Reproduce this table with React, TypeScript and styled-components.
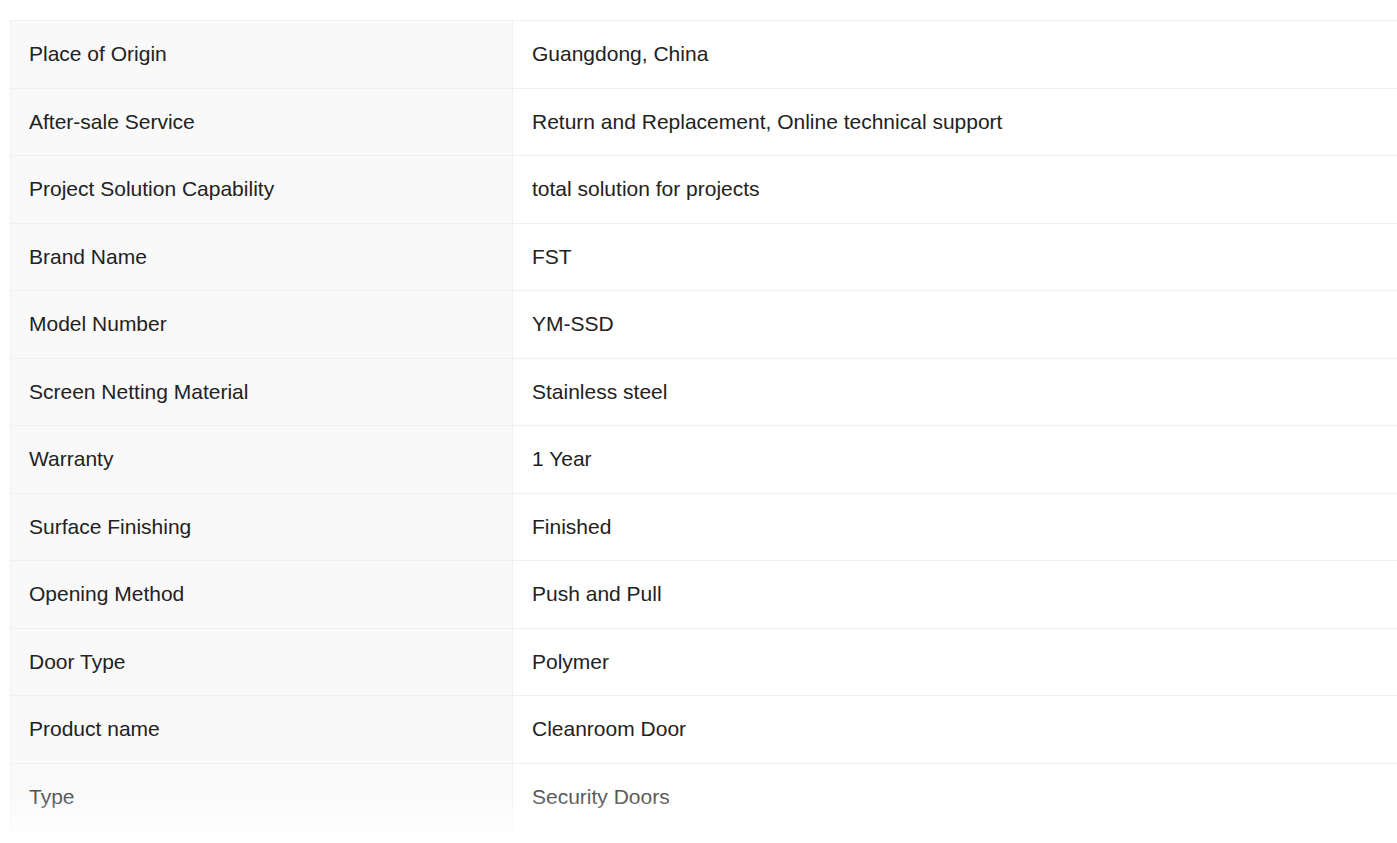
import styled, { createGlobalStyle } from "styled-components"

const GlobalStyle = createGlobalStyle`
    html, body {
        margin: 0;
        padding: 0;
        background: #ffffff;
        overflow: hidden;
    }
    body {
        font-family: "Liberation Sans", Arial, sans-serif;
    }
`

type RowType = {
    label: string
    value: string
}

const rows: RowType[] = [
    { label: "Place of Origin", value: "Guangdong, China" },
    { label: "After-sale Service", value: "Return and Replacement, Online technical support" },
    { label: "Project Solution Capability", value: "total solution for projects" },
    { label: "Brand Name", value: "FST" },
    { label: "Model Number", value: "YM-SSD" },
    { label: "Screen Netting Material", value: "Stainless steel" },
    { label: "Warranty", value: "1 Year" },
    { label: "Surface Finishing", value: "Finished" },
    { label: "Opening Method", value: "Push and Pull" },
    { label: "Door Type", value: "Polymer" },
    { label: "Product name", value: "Cleanroom Door" },
    { label: "Type", value: "Security Doors" },
]

export default function App() {
    return (
        <>
            <GlobalStyle />
            <Page>
                <Wrapper>
                    <Table>
                        {rows.map((row) => (
                            <Row key={row.label}>
                                <Label>{row.label}</Label>
                                <Value>{row.value}</Value>
                            </Row>
                        ))}
                    </Table>
                    <Fade />
                </Wrapper>
            </Page>
        </>
    )
}

const Page = styled.div`
    width: 100vw;
    height: 843px;
    overflow: hidden;
    padding: 20px 0 0 10px;
    box-sizing: border-box;
`

const Wrapper = styled.div`
    position: relative;
    height: 823px;
    overflow: hidden;
`

const Table = styled.div`
    width: 1420px;
    display: flex;
    flex-direction: column;
    border-top: 1px solid #f0f0f0;
    border-left: 1px solid #f0f0f0;
`

const Row = styled.div`
    display: grid;
    grid-template-columns: 502px 1fr;
    height: 67.5px;
    box-sizing: border-box;
    border-bottom: 1.5px solid #f0f0f0;
`

const Label = styled.div`
    display: flex;
    align-items: center;
    padding-left: 18px;
    background: #f9f9f9;
    border-right: 1.5px solid #f0f0f0;
    font-size: 21px;
    color: #222;
`

const Value = styled.div`
    display: flex;
    align-items: center;
    padding-left: 19px;
    font-size: 21px;
    color: #222;
`

const Fade = styled.div`
    position: absolute;
    left: 0;
    right: 0;
    bottom: 0;
    height: 100px;
    background: linear-gradient(
        to bottom,
        rgba(255, 255, 255, 0) 0%,
        rgba(255, 255, 255, 0.25) 55%,
        rgba(255, 255, 255, 0.95) 100%
    );
    pointer-events: none;
`
